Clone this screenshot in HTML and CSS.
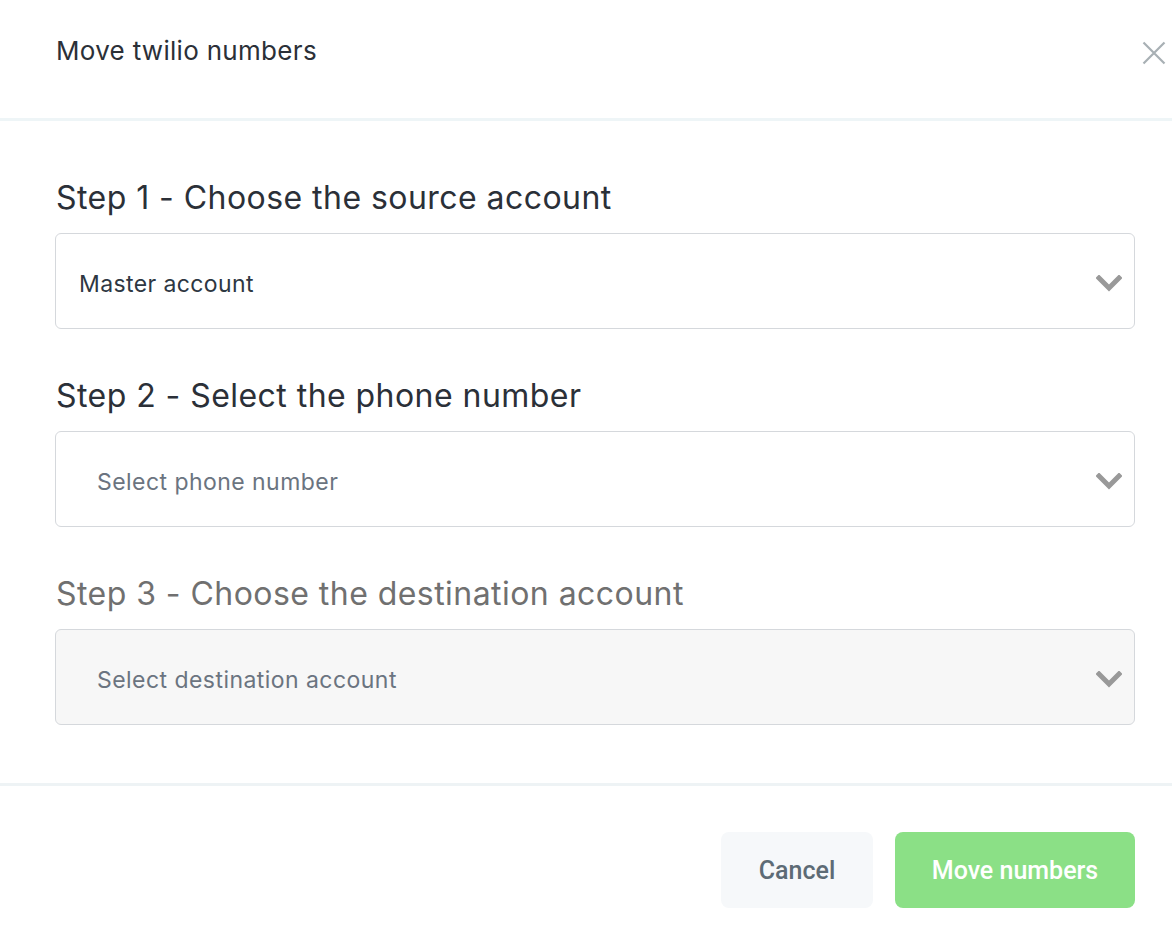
FILE: index.html
```html
<!DOCTYPE html>
<html>
<head>
<meta charset="utf-8">
<link rel="stylesheet" href="styles.css">
</head>
<body>
<div class="modal">
  <header class="modal-header">
    <h1 class="modal-title">Move twilio numbers</h1>
    <button class="close" aria-label="Close">
      <svg width="24" height="24" viewBox="0 0 24 24"><path d="M1.5 1.5 L22.5 22.5 M22.5 1.5 L1.5 22.5" stroke="#a8b0b4" stroke-width="2.2" fill="none"/></svg>
    </button>
  </header>
  <main class="modal-body">
    <section class="step">
      <h2 class="step-title">Step 1 - Choose the source account</h2>
      <div class="select">
        <span class="value">Master account</span>
        <svg class="chev" width="26" height="18" viewBox="0 0 26 18"><path d="M3 3 L13 13 L23 3" stroke="#999999" stroke-width="5" fill="none" stroke-linejoin="miter" stroke-linecap="square"/></svg>
      </div>
    </section>
    <section class="step">
      <h2 class="step-title">Step 2 - Select the phone number</h2>
      <div class="select">
        <span class="placeholder">Select phone number</span>
        <svg class="chev" width="26" height="18" viewBox="0 0 26 18"><path d="M3 3 L13 13 L23 3" stroke="#999999" stroke-width="5" fill="none" stroke-linejoin="miter" stroke-linecap="square"/></svg>
      </div>
    </section>
    <section class="step disabled">
      <h2 class="step-title">Step 3 - Choose the destination account</h2>
      <div class="select">
        <span class="placeholder">Select destination account</span>
        <svg class="chev" width="26" height="18" viewBox="0 0 26 18"><path d="M3 3 L13 13 L23 3" stroke="#999999" stroke-width="5" fill="none" stroke-linejoin="miter" stroke-linecap="square"/></svg>
      </div>
    </section>
  </main>
  <footer class="modal-footer">
    <button class="btn btn-cancel">Cancel</button>
    <button class="btn btn-primary">Move numbers</button>
  </footer>
</div>
</body>
</html>
```

FILE: styles.css
```css
html, body {
  margin: 0;
  padding: 0;
  background: #ffffff;
}
body {
  font-family: Inter, "Noto Sans", sans-serif;
  color: #2b3038;
}
.modal {
  width: 1172px;
  height: 934px;
  display: flex;
  flex-direction: column;
}
.modal-header {
  height: 121px;
  flex: none;
  box-sizing: border-box;
  border-bottom: 3px solid #eef5f7;
  display: flex;
  align-items: flex-start;
  justify-content: space-between;
  padding: 35px 6px 0 56px;
}
.modal-title {
  margin: 0;
  font-size: 26px;
  font-weight: 400;
  line-height: 32px;
  letter-spacing: 0.3px;
  color: #2b3038;
}
.close {
  border: 0;
  background: transparent;
  padding: 0;
  width: 24px;
  height: 24px;
  margin-top: 6px;
}
.close svg { display: block; }
.modal-body {
  padding: 57px 37px 58px 55px;
  border-bottom: 3px solid #eef3f5;
  display: flex;
  flex-direction: column;
  gap: 47px;
}
.step-title {
  margin: 0 0 15px 1px;
  font-size: 32px;
  font-weight: 400;
  line-height: 40px;
  letter-spacing: 0.45px;
  color: #2b3038;
}
.select {
  height: 96px;
  box-sizing: border-box;
  border: 1px solid #d5d8dc;
  border-radius: 6px;
  background: #ffffff;
  display: flex;
  align-items: center;
  justify-content: space-between;
  padding: 0 12px 0 23px;
}
.value {
  font-size: 23px;
  letter-spacing: 0.4px;
  color: #2e3742;
  margin-top: 5px;
}
.placeholder {
  font-size: 23px;
  letter-spacing: 0.45px;
  color: #6b7480;
  padding-left: 18px;
  margin-top: 5px;
}
.chev { display: block; margin-top: 6px; }
.disabled .step-title { color: #707070; }
.disabled .select { background: #f7f7f7; }
.modal-footer {
  display: flex;
  justify-content: flex-end;
  gap: 22px;
  padding: 46px 37px 0 0;
}
.btn {
  height: 76px;
  border: 0;
  border-radius: 8px;
  font-family: Roboto, "Noto Sans", sans-serif;
  font-weight: 500;
  font-size: 25px;
}
.btn-cancel {
  width: 152px;
  background: #f6f8fa;
  color: #5d6b75;
}
.btn-primary {
  width: 240px;
  background: #8be086;
  color: #ffffff;
}
```
